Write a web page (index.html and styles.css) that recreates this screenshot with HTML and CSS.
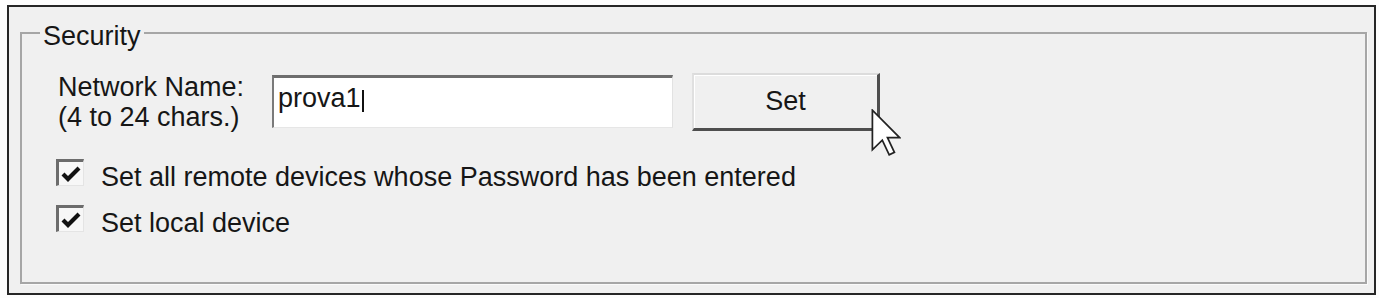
FILE: index.html
```html
<!DOCTYPE html>
<html>
<head>
<meta charset="utf-8">
<link rel="stylesheet" href="styles.css">
</head>
<body>
<div class="window">
  <fieldset class="group">
    <legend class="group-title">Security</legend>
    <div class="group-body">
      <div class="name-row">
        <div class="name-label">Network Name:<br>(4 to 24 chars.)</div>
        <div class="textbox"><span class="tb-text">prova1</span><span class="caret"></span></div>
        <div class="btn-wrap">
          <button class="btn">Set</button>
          <svg class="pointer" viewBox="0 0 12 19" width="30" height="47"><path d="M0.5 0.5 L0.5 16.5 L4.5 12.6 L7.3 18.5 L9.4 17.5 L6.6 11.6 L11.5 11.6 Z" fill="#fff" stroke="#222" stroke-width="0.7" stroke-linejoin="miter"/></svg>
        </div>
      </div>
      <div class="check-row">
        <span class="box"><svg viewBox="0 0 24 24" width="24" height="24"><polyline points="4,12 9,17 20,6" fill="none" stroke="#111" stroke-width="4.2"/></svg></span>
        <span class="check-text">Set all remote devices whose Password has been entered</span>
      </div>
      <div class="check-row">
        <span class="box"><svg viewBox="0 0 24 24" width="24" height="24"><polyline points="4,12 9,17 20,6" fill="none" stroke="#111" stroke-width="4.2"/></svg></span>
        <span class="check-text">Set local device</span>
      </div>
    </div>
  </fieldset>
</div>
</body>
</html>
```
FILE: styles.css
```css
* { box-sizing: border-box; }
html, body { margin: 0; padding: 0; background: #fdfdfd; }
body {
  font-family: "Liberation Sans", Arial, sans-serif;
  font-size: 27px;
  color: #161616;
}
.window {
  margin: 5px 0 0 7px;
  width: 1369px;
  height: 290px;
  border: 2px solid #262626;
  background: #f0f0f0;
  padding: 10px 7px 9px 11px;
  display: flex;
  flex-direction: column;
}
.group {
  flex: 1;
  margin: 0;
  padding: 0;
  border: 2px solid #a6a6a6;
  box-shadow: 1px 1px 0 #fafafa;
  min-width: 0;
}
.group-title {
  margin-left: 18px;
  padding: 6px 3px 0 3px;
  line-height: 26px;
  background: #f0f0f0;
}
.group-body {
  padding: 21px 0 0 36px;
}
.name-row {
  display: flex;
  align-items: flex-start;
}
.name-label {
  margin-top: 2px;
  width: 214px;
  line-height: 30px;
  white-space: nowrap;
}
.textbox {
  margin-top: 5px;
  width: 401px;
  height: 53px;
  background: #fff;
  border-top: 3px solid #6e6e6e;
  border-left: 2px solid #7a7a7a;
  border-right: 1px solid #e2e2e2;
  border-bottom: 1px solid #e6e6e6;
  padding: 5px 0 0 4px;
  line-height: 30px;
  white-space: nowrap;
}
.caret {
  display: inline-block;
  width: 2px;
  height: 22px;
  background: #111;
  vertical-align: -5px;
  margin-left: 1px;
}
.btn-wrap {
  position: relative;
  margin-top: 3px;
  margin-left: 19px;
}
.btn {
  display: block;
  width: 188px;
  height: 58px;
  font: inherit;
  color: inherit;
  background: #f0f0f0;
  border-top: 2px solid #dcdcdc;
  border-left: 2px solid #e0e0e0;
  border-right: 3px solid #4e4e4e;
  border-bottom: 3px solid #4e4e4e;
  box-shadow: inset 1px 1px 0 #fff;
  padding: 0;
}
.pointer {
  position: absolute;
  left: 179px;
  top: 36px;
  display: block;
}
.check-row {
  display: flex;
  align-items: flex-start;
  height: 46px;
  line-height: 46px;
}
.name-row + .check-row { margin-top: 22px; }
.box {
  margin-top: 5px;
  margin-left: -2px;
  width: 28px;
  height: 27px;
  background: #f7f7f7;
  border-top: 3px solid #6c6c6c;
  border-left: 3px solid #6c6c6c;
  border-right: 1px solid #e4e4e4;
  border-bottom: 1px solid #e4e4e4;
  display: flex;
  align-items: center;
  justify-content: center;
}
.box svg { display: block; }
.check-text {
  margin-left: 17px;
  white-space: nowrap;
}
```
